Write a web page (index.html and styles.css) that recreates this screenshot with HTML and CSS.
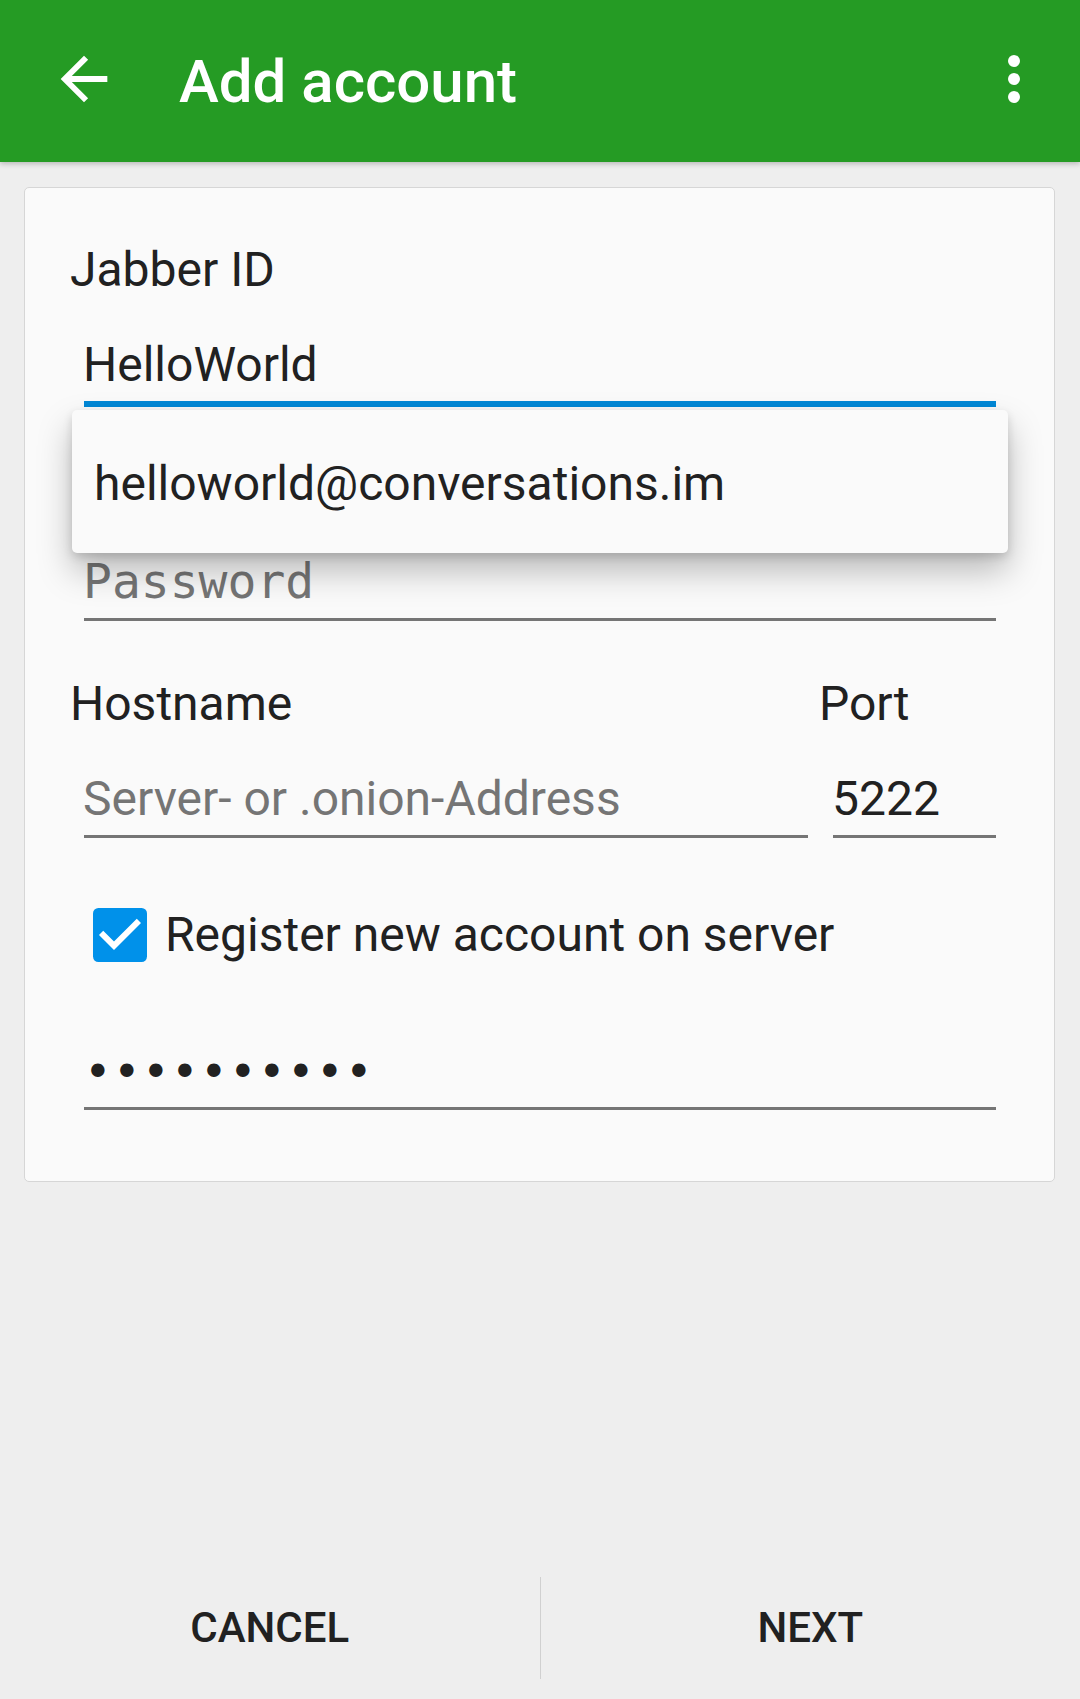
FILE: index.html
```html
<!DOCTYPE html>
<html lang="en">
<head>
<meta charset="utf-8">
<title>Add account</title>
<link rel="stylesheet" href="styles.css">
</head>
<body>
<div class="screen">
  <header class="appbar">
    <svg class="icon-back" viewBox="0 0 24 24" aria-hidden="true"><path d="M20 11H7.83l5.59-5.59L12 4l-8 8 8 8 1.41-1.41L7.83 13H20v-2z"/></svg>
    <h1 class="title">Add account</h1>
    <svg class="icon-more" viewBox="0 0 24 24" aria-hidden="true"><circle cx="12" cy="6" r="2"/><circle cx="12" cy="12" r="2"/><circle cx="12" cy="18" r="2"/></svg>
  </header>

  <main class="content">
    <section class="card">
      <div class="label">Jabber ID</div>
      <div class="field field-focused"><span class="value">HelloWorld</span></div>
      <div class="field field-password"><span class="hint mono">Password</span></div>

      <div class="host-grid">
        <div class="label">Hostname</div>
        <div class="label">Port</div>
        <div class="field field-host"><span class="hint">Server- or .onion-Address</span></div>
        <div class="field field-host"><span class="value">5222</span></div>
      </div>

      <div class="check-row">
        <svg class="checkbox" viewBox="3 3 18 18" aria-hidden="true">
          <rect x="3" y="3" width="18" height="18" rx="1.8" class="checkbox-box"/>
          <path class="checkbox-mark" d="M10 17l-5-5 1.41-1.41L10 14.17l7.59-7.59L19 8l-9 9z"/>
        </svg>
        <span class="check-label">Register new account on server</span>
      </div>

      <div class="field field-secret"><span class="dots mono">••••••••••</span></div>

      <div class="popup"><span class="popup-item">helloworld@conversations.im</span></div>
    </section>
  </main>

  <footer class="buttons">
    <div class="btn">CANCEL</div>
    <div class="divider"></div>
    <div class="btn">NEXT</div>
  </footer>
</div>
</body>
</html>
```

FILE: styles.css
```css
* { box-sizing: border-box; }

html, body {
  margin: 0;
  padding: 0;
}

body {
  background: #eeeeee;
  font-family: Roboto, "Liberation Sans", sans-serif;
  color: #212121;
}

.screen {
  width: 1080px;
  height: 1699px;
  display: flex;
  flex-direction: column;
  overflow: hidden;
}

/* App bar */
.appbar {
  position: relative;
  z-index: 2;
  height: 162px;
  flex: none;
  background: #259b24;
  box-shadow: 0 2px 5px rgba(0, 0, 0, 0.22);
  display: flex;
  align-items: center;
  padding: 0 30px 4px 49px;
}

.icon-back {
  width: 70px;
  height: 70px;
  fill: #ffffff;
  flex: none;
}

.title {
  flex: 1;
  margin: 6px 0 0 60px;
  font-size: 60px;
  line-height: 70px;
  font-weight: 500;
  color: #ffffff;
  letter-spacing: 0;
}

.icon-more {
  width: 72px;
  height: 72px;
  fill: #ffffff;
  flex: none;
}

/* Content */
.content {
  flex: 1;
  padding: 25px 25px 0 24px;
}

.card {
  position: relative;
  background: #fafafa;
  border: 1px solid #d6d6d6;
  border-radius: 5px;
  padding: 54px 58px 71px 45px;
}

.label {
  font-size: 48px;
  line-height: 56px;
  color: #212121;
}

.field {
  margin-left: 14px;
  padding-bottom: 8px;
  border-bottom: 3px solid #757575;
  font-size: 48px;
  line-height: 56px;
  white-space: nowrap;
}

.field-focused {
  margin-top: 39px;
  border-bottom: 6px solid #0288d6;
}

.field-password {
  margin-top: 146px;
}

.value {
  color: #212121;
  margin-left: -1px;
}

.hint {
  color: #757575;
  margin-left: -1px;
}

.mono {
  font-family: "DejaVu Sans Mono", "Liberation Mono", monospace;
}

.host-grid {
  margin-top: 55px;
  display: grid;
  grid-template-columns: 738px 177px;
  column-gap: 11px;
}

.field-host {
  margin-top: 39px;
}

.check-row {
  margin-top: 69px;
  display: flex;
  align-items: center;
  height: 56px;
}

.checkbox {
  width: 54px;
  height: 54px;
  margin-left: 23px;
  flex: none;
}

.checkbox-box {
  fill: #0091ea;
}

.checkbox-mark {
  fill: #ffffff;
}

.check-label {
  margin-left: 18px;
  font-size: 48px;
  line-height: 56px;
  color: #212121;
}

.field-secret {
  margin-top: 81px;
  padding-bottom: 7px;
}

.dots {
  color: #212121;
  font-size: 46px;
  letter-spacing: 1.3px;
  margin-left: 0;
}

/* Autocomplete dropdown */
.popup {
  position: absolute;
  left: 47px;
  top: 222px;
  width: 936px;
  height: 143px;
  background: #fafafa;
  border-radius: 5px;
  box-shadow: 0 18px 34px rgba(0, 0, 0, 0.26), 0 4px 10px rgba(0, 0, 0, 0.14);
  display: flex;
  align-items: center;
  padding-left: 22px;
}

.popup-item {
  font-size: 48px;
  line-height: 56px;
  color: #212121;
  margin-top: 4px;
}

/* Bottom buttons */
.buttons {
  flex: none;
  height: 143px;
  display: flex;
  align-items: center;
}

.btn {
  flex: 1;
  text-align: center;
  font-size: 42px;
  line-height: 56px;
  font-weight: 500;
  color: #212121;
}

.divider {
  width: 1px;
  height: 102px;
  background: #d0d0d0;
  flex: none;
}
```
